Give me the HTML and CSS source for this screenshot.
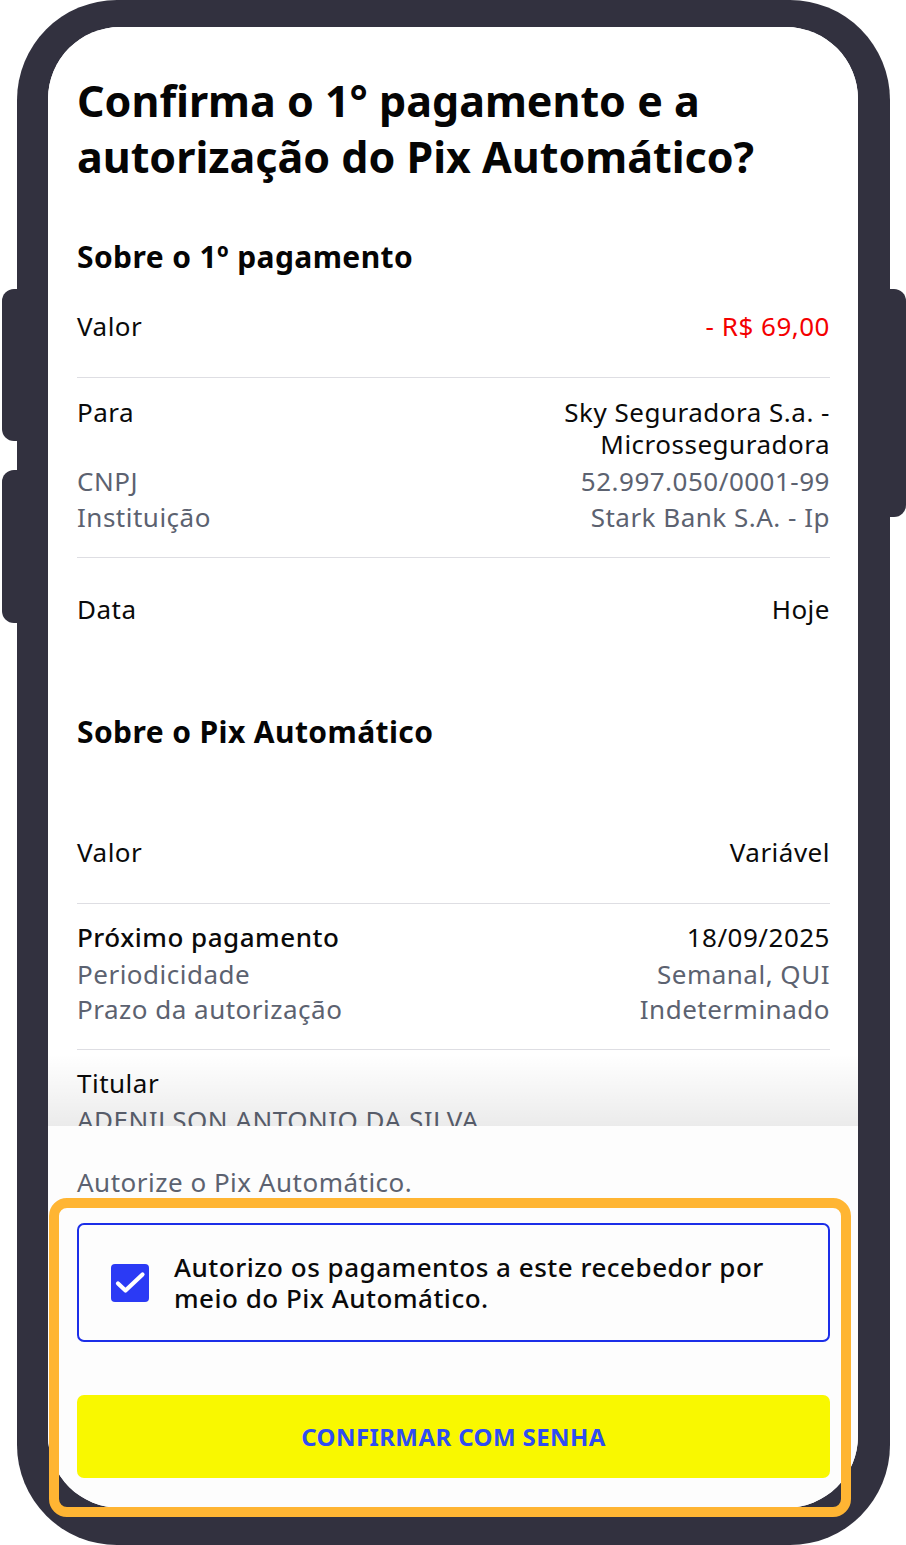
FILE: index.html
```html
<!DOCTYPE html>
<html lang="pt-BR">
<head>
<meta charset="utf-8">
<title>Confirmar Pix Automático</title>
<link rel="stylesheet" href="styles.css">
</head>
<body>
<div class="phone">
  <span class="side-btn side-left-1"></span>
  <span class="side-btn side-left-2"></span>
  <span class="side-btn side-right"></span>
  <div class="screen">
    <div class="scroll">
      <h1 class="title">Confirma o 1° pagamento e a autorização do Pix Automático?</h1>

      <h2 class="section-title first">Sobre o 1º pagamento</h2>
      <div class="group single">
        <div class="row"><span class="label">Valor</span><span class="value red">- R$ 69,00</span></div>
      </div>
      <div class="group multi">
        <div class="row main"><span class="label">Para</span><span class="value">Sky Seguradora S.a. -<br>Microsseguradora</span></div>
        <div class="row sub"><span class="label">CNPJ</span><span class="value">52.997.050/0001-99</span></div>
        <div class="row sub"><span class="label">Instituição</span><span class="value">Stark Bank S.A. - Ip</span></div>
      </div>
      <div class="group single last">
        <div class="row"><span class="label">Data</span><span class="value">Hoje</span></div>
      </div>

      <h2 class="section-title second">Sobre o Pix Automático</h2>
      <div class="group single top-gap">
        <div class="row"><span class="label">Valor</span><span class="value">Variável</span></div>
      </div>
      <div class="group multi tight">
        <div class="row main"><span class="label strong">Próximo pagamento</span><span class="value">18/09/2025</span></div>
        <div class="row sub"><span class="label">Periodicidade</span><span class="value">Semanal, QUI</span></div>
        <div class="row sub"><span class="label">Prazo da autorização</span><span class="value">Indeterminado</span></div>
      </div>
      <div class="group multi last">
        <div class="row main"><span class="label">Titular</span></div>
        <div class="row sub name"><span class="label">ADENILSON ANTONIO DA SILVA</span></div>
      </div>
      <div class="fade"></div>
    </div>

    <div class="sheet">
      <p class="hint">Autorize o Pix Automático.</p>
      <label class="consent">
        <span class="checkbox">
          <svg viewBox="0 0 38 38" width="38" height="38" aria-hidden="true"><path d="M7 19.5l7.5 7L31.5 10.5" fill="none" stroke="#fff" stroke-width="4.2" stroke-linecap="round" stroke-linejoin="round"/></svg>
        </span>
        <span class="consent-text">Autorizo os pagamentos a este recebedor por meio do Pix Automático.</span>
      </label>
      <button class="confirm" type="button">CONFIRMAR COM SENHA</button>
    </div>
  </div>
  <div class="highlight"></div>
</div>
</body>
</html>
```

FILE: styles.css
```css
html, body {
  margin: 0;
  padding: 0;
  background: #ffffff;
  overflow: hidden;
}

body {
  width: 906px;
  height: 1545px;
  font-family: "Noto Sans", "Open Sans", sans-serif;
  color: #0a0a0a;
}

.phone {
  position: relative;
  width: 873px;
  height: 1545px;
  margin-left: 17px;
  background: #32313f;
  border-radius: 100px;
  padding: 27px 0 0 31px;
  box-sizing: border-box;
}

.side-btn {
  position: absolute;
  background: #32313f;
  width: 24px;
}
.side-left-1 { left: -15px; top: 289px; height: 152px; border-radius: 12px 0 0 12px; }
.side-left-2 { left: -15px; top: 470px; height: 153px; border-radius: 12px 0 0 12px; }
.side-right { right: -16px; top: 289px; height: 228px; border-radius: 0 12px 12px 0; }

.screen {
  width: 810px;
  height: 1481px;
  background: #fdfdfd;
  border-radius: 72px;
  overflow: hidden;
  display: flex;
  flex-direction: column;
}

.scroll {
  position: relative;
  height: 1099px;
  flex: none;
  overflow: hidden;
  padding: 46px 28px 0 29px;
  box-sizing: border-box;
  background: #ffffff;
}

.title {
  margin: 0;
  font-size: 43px;
  line-height: 56px;
  font-weight: 700;
  color: #050505;
}

.section-title {
  margin: 0;
  font-size: 30px;
  line-height: 36px;
  font-weight: 700;
  letter-spacing: 0.4px;
  color: #050505;
}
.section-title.first { margin-top: 54px; }
.section-title.second { margin-top: 54px; }

.group {
  border-bottom: 1px solid #dedee3;
}
.group.single { padding: 35px 0 35px; }
.group.single.top-gap { padding-top: 86px; }
.group.multi { padding: 18px 0 24px; }
.group.last { border-bottom: none; }
.group.single.last { padding-top: 35px; }
.group.multi.tight { padding-top: 17px; }
.group.multi.last { padding-top: 17px; }

.row {
  display: flex;
  justify-content: space-between;
  align-items: flex-start;
  font-size: 26px;
  line-height: 32px;
  letter-spacing: 0.5px;
}
.row.sub { margin-top: 4px; color: #5c6270; }
.row.main + .row.sub { margin-top: 5px; }
.tight .row.main + .row.sub { margin-top: 5px; }
.tight .row.sub + .row.sub { margin-top: 3px; }
.row.name { margin-top: 3px; }

.label { font-weight: 400; }
.label.strong { font-weight: 500; }
.value { text-align: right; }
.red { color: #f40000; }

.fade {
  position: absolute;
  left: 0;
  right: 0;
  bottom: 0;
  height: 72px;
  background: linear-gradient(to bottom, rgba(0,0,0,0), rgba(0,0,0,0.08));
}

.sheet {
  flex: 1;
  padding: 40px 28px 0 29px;
  background: #fdfdfd;
  display: flex;
  flex-direction: column;
}

.hint {
  margin: 0;
  font-size: 26px;
  line-height: 32px;
  letter-spacing: 0.5px;
  color: #5c6270;
}

.consent {
  margin-top: 25px;
  height: 119px;
  box-sizing: border-box;
  border: 2px solid #1c2ee8;
  border-radius: 7px;
  display: flex;
  align-items: center;
  padding: 0 30px 0 32px;
  gap: 25px;
}

.checkbox {
  flex: none;
  width: 38px;
  height: 38px;
  border-radius: 4px;
  background: #2b3af5;
  display: flex;
  align-items: center;
  justify-content: center;
}

.consent-text {
  font-size: 26px;
  line-height: 31px;
  font-weight: 500;
  letter-spacing: 0.5px;
  color: #0a0a0a;
}

.confirm {
  margin-top: 53px;
  height: 83px;
  border: none;
  border-radius: 7px;
  background: #f9f800;
  color: #2f4df2;
  font-family: "Noto Sans", "Open Sans", sans-serif;
  font-size: 24px;
  font-weight: 700;
  letter-spacing: 0.4px;
}

.highlight {
  position: absolute;
  left: 32px;
  top: 1198px;
  width: 802px;
  height: 319px;
  box-sizing: border-box;
  border: 10px solid #ffb533;
  border-radius: 18px;
}
```
